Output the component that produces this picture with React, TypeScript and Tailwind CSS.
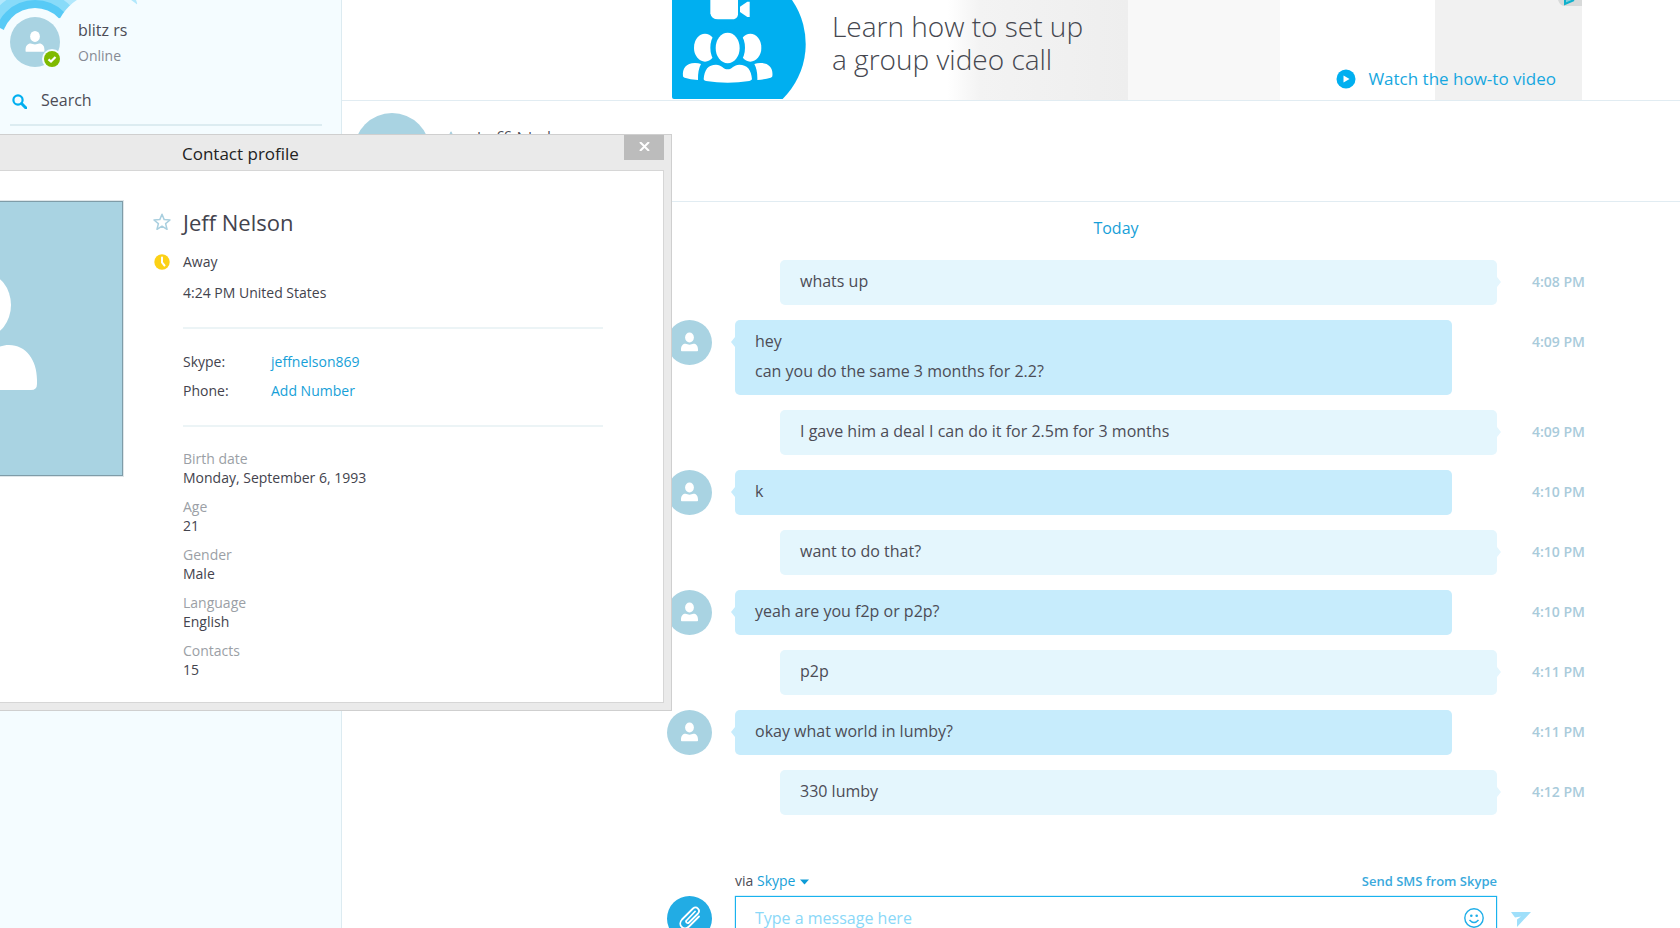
import React from 'react';

interface Message {
  id: number;
  own: boolean;
  lines: string[];
  time: string;
}

const messages: Message[] = [
  { id: 1, own: true, lines: ['whats up'], time: '4:08 PM' },
  { id: 2, own: false, lines: ['hey', 'can you do the same 3 months for 2.2?'], time: '4:09 PM' },
  { id: 3, own: true, lines: ['I gave him a deal I can do it for 2.5m for 3 months'], time: '4:09 PM' },
  { id: 4, own: false, lines: ['k'], time: '4:10 PM' },
  { id: 5, own: true, lines: ['want to do that?'], time: '4:10 PM' },
  { id: 6, own: false, lines: ['yeah are you f2p or p2p?'], time: '4:10 PM' },
  { id: 7, own: true, lines: ['p2p'], time: '4:11 PM' },
  { id: 8, own: false, lines: ['okay what world in lumby?'], time: '4:11 PM' },
  { id: 9, own: true, lines: ['330 lumby'], time: '4:12 PM' }
];

const details = [
  { label: 'Birth date', value: 'Monday, September 6, 1993' },
  { label: 'Age', value: '21' },
  { label: 'Gender', value: 'Male' },
  { label: 'Language', value: 'English' },
  { label: 'Contacts', value: '15' }
];

const Avatar: React.FC<{ className: string }> = ({ className }) => (
  <svg viewBox="0 0 45 45" className={`shrink-0 ${className}`} aria-hidden="true">
    <circle cx="22.5" cy="22.5" r="22.5" fill="#a9d3e2" />
    <ellipse cx="22.5" cy="17.5" rx="4.4" ry="5" fill="#fff" />
    <path d="M14 30.5V29.500C14 25.800 16 23.800 18.500 23.800C20 23.800 21 24.700 22.500 24.700C24 24.700 25 23.800 26.500 23.800C29 23.800 31 25.800 31 29.500V30.500Q31 31.300 30.200 31.300H14.800Q14 31.300 14 30.500Z" fill="#fff" />
  </svg>
);

const StarIcon: React.FC<{ className: string }> = ({ className }) => (
  <svg viewBox="0 0 18 18" className={`shrink-0 ${className}`} fill="none" stroke="#a9cfdf" strokeWidth="1.5" strokeLinejoin="round" aria-hidden="true">
    <path d="M9 1.200L11.200 6.600L17 7L12.600 10.600L14 16.300L9 13.200L4 16.300L5.400 10.600L1 7L6.800 6.600Z" />
  </svg>
);

const Sidebar: React.FC = () => (
  <aside className="relative w-[342px] shrink-0 border-r border-[#dcebf1] bg-[#f4fcff]">
    <svg className="absolute left-0 top-0 h-[40px] w-[150px]" viewBox="0 0 150 40" aria-hidden="true">
      <circle cx="35" cy="41" r="109" fill="#b2e8fc" />
      <circle cx="35" cy="41" r="50" fill="#88dbf9" />
      <circle cx="35" cy="41" r="41" fill="#57caf6" />
      <circle cx="35" cy="41" r="33" fill="#f4fcff" />
      <circle cx="104" cy="42" r="50" fill="#f4fcff" />
      <path d="M0 28L4 30L6 34L60 18L75 40H0Z" fill="#f4fcff" />
      <path d="M140 0L136 5L120 40H150V0Z" fill="#f4fcff" />
    </svg>
    <div className="relative flex gap-[18px] pl-[10px] pt-[17px]">
      <div className="relative h-[50px] w-[50px]">
        <Avatar className="h-[50px] w-[50px]" />
        <svg className="absolute -bottom-0.5 -right-0.5 h-5 w-5" viewBox="0 0 20 20" aria-hidden="true">
          <circle cx="10" cy="10" r="10" fill="#f4fcff" />
          <circle cx="10" cy="10" r="8" fill="#7fba00" />
          <path d="M6.500 10.300L9 12.500L13.500 8" fill="none" stroke="#fff" strokeWidth="2.2" />
        </svg>
      </div>
      <div>
        <p className="text-[16px] leading-[26px] text-[#4c4c56]">blitz rs</p>
        <p className="text-[14px] leading-[26px] text-[#868a94]">Online</p>
      </div>
    </div>
    <label className="ml-[10px] mr-[19px] mt-[14px] flex h-[43px] items-start gap-[14px] border-b-2 border-[#dcecf1] pl-[2px] pt-[5px]">
      <svg className="mt-[6px] h-[15px] w-[15px] shrink-0" viewBox="0 0 15 15" fill="none" stroke="#00aff0" aria-hidden="true">
        <circle cx="6" cy="6" r="4.600" strokeWidth="2.200" />
        <path d="M9.500 9.500L14 14" strokeWidth="3" strokeLinecap="round" />
      </svg>
      <input type="text" aria-label="Search" placeholder="Search" className="h-6 w-full bg-transparent text-[16px] outline-none placeholder:text-[#4c4c56]" />
    </label>
  </aside>
);

const Banner: React.FC = () => (
  <section className="h-[101px] shrink-0 border-b border-[#e1ecf2] pl-[330px] pr-[98px]">
    <div className="flex h-full bg-[linear-gradient(90deg,#fff_0,#fff_275px,#f3f3f3_308px,#eeeeee_456px,#f8f8f8_456px,#f8f8f8_608px,#fff_608px,#fff_763px,#f1f1f1_763px)]">
      <svg className="h-[99px] w-[134px] shrink-0" viewBox="36 0 402 297" fill="#fff" aria-hidden="true">
        <path d="M36 0H396A232 232 0 0 1 368 297H42Q36 297 36 291Z" fill="#00aff0" />
        <path d="M151 0H234V44Q232 58 214 58H174Q154 58 151 40Z" />
        <path d="M240 20L262 5H269V51H262L240 36Z" />
        <ellipse cx="135" cy="143" rx="33" ry="42" />
        <ellipse cx="271" cy="143" rx="33" ry="42" />
        <ellipse cx="203" cy="143" rx="45" ry="55" stroke="#00aff0" strokeWidth="14" />
        <ellipse cx="203" cy="143" rx="45" ry="55" fill="#00aff0" />
        <ellipse cx="203" cy="144" rx="36" ry="46" />
        <path d="M69 229C66 206 78 189 105 189Q115 189 123 192Q113 210 114 240Q90 238 74 233Q69 232 69 229Z" />
        <path d="M337 229C340 206 328 189 301 189Q291 189 283 192Q293 210 292 240Q316 238 332 233Q337 232 337 229Z" />
        <path d="M131 238C133 208 145 194 168 194C185 194 190 208 203 208C216 208 221 194 238 194C261 194 274 208 276 238Q274 242 268 243Q203 254 138 243Q131 242 131 238Z" />
      </svg>
      <h2 className="ml-[26px] mt-2.5 flex-1 text-[28px] font-light leading-[33px] text-[#45474f]">
        Learn how to set up
        <br />
        a group video call
      </h2>
      <div className="flex flex-col items-end justify-between">
        <svg className="h-[6px] w-[24px]" viewBox="0 0 24 6" aria-hidden="true">
          <path d="M0 0H24V6H7Q2 6 0 0Z" fill="#d8dada" />
          <path d="M7 0V4L16 0" fill="#7fcfdd" stroke="#0fb1cc" strokeWidth="2" />
        </svg>
        <a href="#video" className="mb-[9px] mr-[26px] flex items-center gap-3 text-[17px] leading-6 text-[#16a7e0]">
          <svg className="h-5 w-5" viewBox="0 0 20 20" aria-hidden="true">
            <circle cx="10" cy="10" r="9.500" fill="#00aff0" />
            <path d="M7.500 6.500L13.500 10L7.500 13.500Z" fill="#fff" />
          </svg>
          Watch the how-to video
        </a>
      </div>
    </div>
  </section>
);

const ChatHeader: React.FC = () => (
  <header className="flex h-[101px] shrink-0 items-start border-b border-[#e1ecf2] pl-3 pt-3">
    <Avatar className="h-[76px] w-[76px]" />
    <StarIcon className="ml-3 mt-[18px] h-[18px] w-[18px]" />
    <h1 className="ml-4 mt-[11px] text-[24px] font-light leading-8 text-[#4c4c56]">Jeff Nelson</h1>
  </header>
);

const MessageRow: React.FC<{ message: Message }> = ({ message }) => {
  const { own, lines, time } = message;
  return (
    <li className="flex items-start">
      {own ? <span className="w-[113px] shrink-0" /> : <Avatar className="mr-[23px] h-[45px] w-[45px]" />}
      <div className={`relative flex-1 rounded-[5px] px-5 pb-[9px] pt-1.5 ${own ? 'bg-[#e4f6fd]' : 'mr-[45px] bg-[#c7ecfc]'}`}>
        {own ? (
          <svg className="absolute -right-1 top-4 h-3 w-1" viewBox="0 0 4 12" aria-hidden="true"><path d="M0 0V1L4 6L0 11V12Z" fill="#e4f6fd" /></svg>
        ) : (
          <svg className="absolute -left-1 top-4 h-3 w-1" viewBox="0 0 4 12" aria-hidden="true"><path d="M4 0V1L0 6L4 11V12Z" fill="#c7ecfc" /></svg>
        )}
        {lines.map((line) => (
          <p key={line} className="text-[16px] leading-[30px] text-[#4c4c56]">{line}</p>
        ))}
      </div>
      <time className="ml-[35px] mt-1.5 w-[148px] shrink-0 text-[14px] font-semibold leading-8 text-[#a9cbdb]">{time}</time>
    </li>
  );
};

const Composer: React.FC = () => (
  <form className="mt-[53px] flex items-start">
    <button type="button" aria-label="Attach file" className="mr-[23px] mt-7 shrink-0">
      <svg className="h-[45px] w-[45px]" viewBox="0 0 45 45" aria-hidden="true">
        <circle cx="22.500" cy="22.500" r="22.500" fill="#22ace4" />
        <g transform="translate(11 10)" fill="none" stroke="#fff" strokeWidth="1.800" strokeLinecap="round" strokeLinejoin="round">
          <path d="M17 5.500L8.500 14.500C7 16 9.500 18 11 16.500L20 7.500C23 4 18.500 -0.500 15 2.500L4 13.500C-1 19 6 25.500 11 20.500L21 10.500" />
        </g>
      </svg>
    </button>
    <div className="flex-1">
      <div className="mb-0.5 flex justify-between leading-[26px]">
        <span className="text-[14px] text-[#4c4c56]">
          via{' '}
          <button type="button" className="text-[#179fd8]">
            Skype
            <svg className="ml-[5px] inline h-[6px] w-[9px]" viewBox="0 0 9 6" aria-hidden="true"><path d="M0 0.500H9L4.500 5.500Z" fill="#0e9bd6" /></svg>
          </button>
        </span>
        <a href="#sms" className="text-[13px] font-semibold text-[#3aa9dc]">Send SMS from Skype</a>
      </div>
      <div className="flex h-[43px] items-center border border-[#1ab2ee] pl-[19px] pr-3 shadow-[0_0_1px_#1ab2ee]">
        <input type="text" aria-label="Message" placeholder="Type a message here" className="w-full bg-transparent text-[16px] leading-6 outline-none placeholder:text-[#8ad8f8]" />
        <button type="button" aria-label="Insert emoticon">
          <svg className="h-5 w-5" viewBox="0 0 20 20" aria-hidden="true">
            <circle cx="10" cy="10" r="9.200" fill="none" stroke="#1eaee8" strokeWidth="1.400" />
            <circle cx="7.300" cy="7.800" r="1.300" fill="#1eaee8" />
            <circle cx="12.700" cy="7.800" r="1.300" fill="#1eaee8" />
            <path d="M5.500 12Q10 17 14.500 12" fill="none" stroke="#1eaee8" strokeWidth="1.500" />
          </svg>
        </button>
      </div>
    </div>
    <button type="submit" aria-label="Send message" className="ml-[14px] mt-11 w-[169px] shrink-0">
      <svg className="h-[16px] w-[20px]" viewBox="0 0 20 16" aria-hidden="true">
        <path d="M0 0H20L6 15V7.500L10 4.500L4 5.500Z" fill="#9fdffa" />
      </svg>
    </button>
  </form>
);

const ContactProfile: React.FC = () => (
  <section role="dialog" aria-labelledby="profile-title" className="absolute left-0 top-[134px] w-[672px] border border-l-0 border-[#cfcfcf] bg-[#eaeaea] pb-[7px] pr-[7px]">
    <div className="flex h-[35px] items-start justify-between pl-[182px]">
      <h2 id="profile-title" className="text-[17px] leading-[37px] text-[#222]">Contact profile</h2>
      <button type="button" aria-label="Close" className="flex h-[25px] w-10 items-center justify-center bg-[#bcbcbc] pb-0.5">
        <svg className="h-[9px] w-[11px]" viewBox="0 0 11 9" fill="none" stroke="#fff" strokeWidth="2" aria-hidden="true">
          <path d="M1 0L10 9M10 0L1 9" />
        </svg>
      </button>
    </div>
    <div className="flex h-[533px] items-start border border-l-0 border-[#d6d6d6] bg-white pr-[60px] pt-[29px]">
      <svg className="h-[277px] w-[124px] shrink-0" viewBox="0 0 124 277" aria-hidden="true">
        <path d="M0 0H124V277H0Z" fill="#dfe6e9" />
        <path d="M0 1H123V276H0Z" fill="#7f9ca8" />
        <path d="M0 2H122V275H0Z" fill="#a9d3e2" />
        <ellipse cx="-14" cy="105" rx="25" ry="31" fill="#fff" />
        <path d="M-14 150C-6 150 0 145 9 145C26 145 37 160 37 180V184Q37 190 31 190H-14Z" fill="#fff" />
      </svg>
      <div className="ml-[29px] flex-1">
        <div className="flex items-center gap-3 pt-1.5">
          <StarIcon className="h-[18px] w-[18px]" />
          <h3 className="text-[22px] leading-8 text-[#43434d]">Jeff Nelson</h3>
        </div>
        <div className="mt-[14px] flex items-center gap-3 text-[14px] leading-5 text-[#43434d]">
          <svg className="h-[18px] w-[18px]" viewBox="0 0 18 18" aria-hidden="true">
            <circle cx="9" cy="9" r="7.700" fill="#fcd116" />
            <path d="M9 4.500V9.500L11.500 12.500" fill="none" stroke="#fff" strokeWidth="2" strokeLinecap="round" />
          </svg>
          Away
        </div>
        <div className="ml-[30px] text-[14px] text-[#43434d]">
          <p className="mt-[11px] leading-5">4:24 PM United States</p>
          <dl className="mt-6 grid grid-cols-[88px_1fr] gap-y-[9px] border-y-2 border-[#ecf4f6] pb-6 pt-[23px] leading-5">
            <dt>Skype:</dt>
            <dd><a href="#skype" className="text-[#179fd8]">jeffnelson869</a></dd>
            <dt>Phone:</dt>
            <dd><a href="#phone" className="text-[#179fd8]">Add Number</a></dd>
          </dl>
          <dl className="mt-[22px] space-y-2.5 leading-[19px]">
            {details.map((detail) => (
              <div key={detail.label}>
                <dt className="text-[#9b9fa6]">{detail.label}</dt>
                <dd>{detail.value}</dd>
              </div>
            ))}
          </dl>
        </div>
      </div>
    </div>
  </section>
);

const App: React.FC = () => {
  return (
    <div className="relative flex h-screen overflow-hidden bg-white font-['Open_Sans','Noto_Sans',sans-serif]">
      <Sidebar />
      <main className="flex min-w-0 flex-1 flex-col">
        <Banner />
        <ChatHeader />
        <div className="shrink-0 pl-[325px] pt-[13px]">
          <p className="pl-[68px] pr-[183px] text-center text-[16px] leading-[26px] text-[#179fd8]">Today</p>
          <ul className="mt-[19px] space-y-[15px]">
            {messages.map((message) => (
              <MessageRow key={message.id} message={message} />
            ))}
          </ul>
          <Composer />
        </div>
      </main>
      <ContactProfile />
    </div>
  );
};

export default App;
